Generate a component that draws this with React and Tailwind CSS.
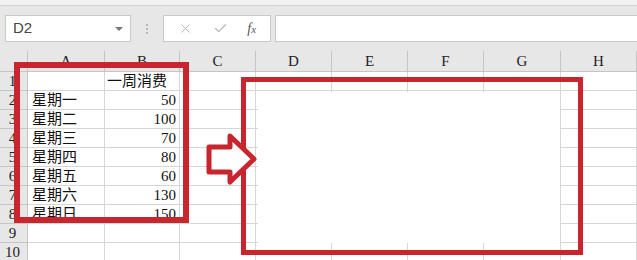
import { X, Check } from "lucide-react";

const cols = ["A", "B", "C", "D", "E", "F", "G", "H"];
const data = [
  ["", "一周消费"],
  ["星期一", "50"],
  ["星期二", "100"],
  ["星期三", "70"],
  ["星期四", "80"],
  ["星期五", "60"],
  ["星期六", "130"],
  ["星期日", "150"],
  ["", ""],
  ["", ""],
];

const cellFont = { fontFamily: '"Liberation Serif", "Noto Sans CJK SC", serif' };

export default function App() {
  return (
    <div className="relative h-[260px] w-[637px] overflow-hidden bg-white">
      <div className="h-[6px] border-b border-[#d2d0d2] bg-[#f2f1f2]" />
      <div className="flex h-[45px] items-center gap-0 bg-[#e8e7e8] pl-[5px]">
        <div className="flex h-[27px] w-[126px] items-center justify-between border border-[#cbc9cb] bg-white pl-[7px] pr-[7px] font-['Liberation_Sans'] text-[15px] text-[#444]">
          <span>D2</span>
          <span className="h-0 w-0 border-x-[4px] border-t-[4px] border-x-transparent border-t-[#777]" />
        </div>
        <div className="flex w-[32px] flex-col items-center gap-[2px]">
          <span className="h-[2px] w-[2px] bg-[#b8b8b8]" />
          <span className="h-[2px] w-[2px] bg-[#b8b8b8]" />
          <span className="h-[2px] w-[2px] bg-[#b8b8b8]" />
        </div>
        <div className="flex h-[27px] w-[108px] items-center justify-around border border-[#cbc9cb] bg-white px-[4px]">
          <X size={15} strokeWidth={1.5} className="text-[#b5b5b5]" />
          <Check size={15} strokeWidth={1.8} className="text-[#b5b5b5]" />
          <span className="font-['Liberation_Serif'] text-[14px] italic text-[#555]">
            f<span className="text-[11px]">x</span>
          </span>
        </div>
        <div className="ml-[4px] h-[27px] flex-1 border-y border-l border-[#cbc9cb] bg-white" />
      </div>

      <div
        className="grid grid-cols-[28px_77px_75px_76px_76px_76px_76px_77px_76px] grid-rows-[21px_repeat(10,19px)] text-[15px] text-[#111]"
        style={cellFont}
      >
        <div className="border-b border-r border-[#c6c4c6] bg-[#e8e7e8]" />
        {cols.map((c) => (
          <div
            key={c}
            className="flex items-center justify-center border-b border-r border-[#c6c4c6] bg-[#e8e7e8] leading-none text-[#222]"
          >
            {c}
          </div>
        ))}
        {data.map((row, i) => (
          <div key={i} className="contents">
            <div className="flex items-center justify-center border-b border-r border-[#c6c4c6] bg-[#e8e7e8] pr-[2px] leading-none text-[#222]">
              {i + 1}
            </div>
            <div className="flex items-center overflow-hidden border-b border-r border-[#d6d6d6] pl-[4px] leading-none">
              {row[0]}
            </div>
            <div
              className={
                i === 0
                  ? "flex items-center overflow-hidden border-b border-r border-[#d6d6d6] pl-[2px] leading-none"
                  : "flex items-center justify-end overflow-hidden border-b border-r border-[#d6d6d6] pr-[3px] leading-none"
              }
            >
              {row[1]}
            </div>
            {cols.slice(2).map((c) => (
              <div key={c} className="border-b border-r border-[#d6d6d6]" />
            ))}
          </div>
        ))}
      </div>

      {/* annotations */}
      <div className="absolute left-[14px] top-[62px] h-[161px] w-[175px] border-[6px] border-[#c9252f]" />
      <div className="absolute left-[258px] top-[92px] h-[151px] w-[302px] bg-white" />
      <div className="absolute left-[241px] top-[77px] h-[178px] w-[342px] border-[5px] border-[#c9252f]" />
      <svg className="absolute left-0 top-0" width="637" height="260" viewBox="0 0 637 260">
        <polygon
          points="209,147 230,147 230,136 254,159 230,182 230,172 209,172"
          fill="white"
          stroke="#c9252f"
          strokeWidth="5"
          strokeLinejoin="round"
        />
      </svg>
    </div>
  );
}
